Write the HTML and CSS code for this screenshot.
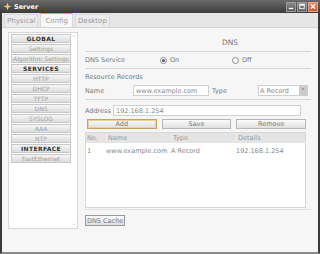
FILE: index.html
```html
<!DOCTYPE html>
<html lang="en">
<head>
  <meta charset="UTF-8">
  <title>Server</title>
  <link rel="stylesheet" href="styles.css">
</head>
<body>
  <div class="window">
    <!-- Title bar -->
    <div class="titlebar">
      <span class="app-icon">
        <svg width="9" height="9" viewBox="0 0 9 9"><path d="M4.5 0.5 L5.5 3.5 L8.5 4.5 L5.5 5.5 L4.5 8.5 L3.5 5.5 L0.5 4.5 L3.5 3.5 Z" fill="#e9c46a"/></svg>
      </span>
      <span class="title">Server</span>
      <div class="controls">
        <span class="ctl">
          <svg width="9" height="9" viewBox="0 0 9 9"><rect x="2" y="6" width="5" height="1.5" fill="#fff"/></svg>
        </span>
        <span class="ctl">
          <svg width="9" height="9" viewBox="0 0 9 9"><rect x="2" y="2" width="5" height="5" fill="none" stroke="#fff" stroke-width="1"/><rect x="2" y="2" width="5" height="1.5" fill="#fff"/></svg>
        </span>
        <span class="ctl close">
          <svg width="9" height="9" viewBox="0 0 9 9"><path d="M2 2 L7 7 M7 2 L2 7" stroke="#fff" stroke-width="1.6"/></svg>
        </span>
      </div>
    </div>

    <!-- Tabs -->
    <div class="tabs">
      <span class="tab">Physical</span>
      <span class="tab active">Config</span>
      <span class="tab">Desktop</span>
    </div>

    <div class="main">
      <!-- Left menu -->
      <div class="sidebar">
        <ul class="menu">
          <li class="menu-head">GLOBAL</li>
          <li>Settings</li>
          <li>Algorithm Settings</li>
          <li class="menu-head">SERVICES</li>
          <li>HTTP</li>
          <li>DHCP</li>
          <li>TFTP</li>
          <li>DNS</li>
          <li>SYSLOG</li>
          <li>AAA</li>
          <li>NTP</li>
          <li class="menu-head">INTERFACE</li>
          <li>FastEthernet</li>
        </ul>
        <div class="scroll">
          <span class="arrow">&#8963;</span>
          <span class="arrow">&#8964;</span>
        </div>
      </div>

      <!-- DNS panel -->
      <div class="panel">
        <div class="panel-title">DNS</div>
        <div class="row service">
          <span class="label">DNS Service</span>
          <span class="radio"><span class="dot on"></span>On</span>
          <span class="radio"><span class="dot"></span>Off</span>
        </div>
        <div class="section">Resource Records</div>
        <div class="row name-row">
          <span class="label">Name</span>
          <span class="input name-input">www.example.com</span>
          <span class="label type-label">Type</span>
          <span class="select">A Record<span class="select-btn">&#709;</span></span>
        </div>
        <div class="row addr-row">
          <span class="label">Address</span>
          <span class="input addr-input">192.168.1.254</span>
        </div>
        <div class="buttons">
          <span class="btn focus">Add</span>
          <span class="btn">Save</span>
          <span class="btn">Remove</span>
        </div>
        <div class="table">
          <div class="thead">
            <span class="c-no">No.</span>
            <span class="c-name">Name</span>
            <span class="c-type">Type</span>
            <span class="c-det">Details</span>
          </div>
          <div class="trow">
            <span class="c-no">1</span>
            <span class="c-name">www.example.com</span>
            <span class="c-type">A Record</span>
            <span class="c-det">192.168.1.254</span>
          </div>
        </div>
        <div class="footer">
          <span class="btn small">DNS Cache</span>
        </div>
      </div>
    </div>
  </div>
</body>
</html>
```

FILE: styles.css
```css
* {
  margin: 0;
  padding: 0;
  box-sizing: border-box;
}

body {
  width: 320px;
  height: 254px;
  overflow: hidden;
  font-family: "DejaVu Sans", Verdana, sans-serif;
  font-size: 6.5px;
  color: #777;
  background: #fff;
}

.window {
  width: 320px;
  height: 254px;
  display: flex;
  flex-direction: column;
  background: #f2f2f2;
  border-left: 2px solid #3a3a3a;
  border-right: 2px solid #3a3a3a;
  border-bottom: 2px solid #8a8a8a;
}

/* Title bar */
.titlebar {
  height: 13px;
  margin: 0 -2px;
  display: flex;
  align-items: center;
  padding: 0 2px 0 3px;
  background: linear-gradient(#6a6a6a, #3c3c3c);
  color: #fff;
}

.app-icon {
  display: flex;
  margin-right: 2px;
}

.title {
  font-weight: bold;
  font-size: 6.5px;
}

.controls {
  margin-left: auto;
  display: flex;
  gap: 1px;
}

.ctl {
  width: 10px;
  height: 10px;
  display: flex;
  align-items: center;
  justify-content: center;
  background: linear-gradient(#8a8a8a, #5a5a5a);
  border: 1px solid #9a9a9a;
}

.ctl.close {
  background: linear-gradient(#f08a5a, #d0542a);
  border-color: #f0a080;
}

/* Tabs */
.tabs {
  height: 15px;
  display: flex;
  align-items: flex-end;
  gap: 2px;
  padding: 1px 0 0 2px;
  background: #e6e6e6;
  border-bottom: 1px solid #d4d4d4;
}

.tab {
  height: 13px;
  padding: 0 2px;
  display: flex;
  align-items: center;
  font-size: 7px;
  color: #999;
  background: #ececec;
  border: 1px solid #dadada;
  border-bottom: none;
}

.tab.active {
  height: 14px;
  padding: 0 4px;
  background: #f8f8f8;
  border-top: 1px solid #e8a030;
}

/* Main area */
.main {
  flex: 1;
  display: flex;
  gap: 7px;
  padding: 4px 7px 0 6px;
  background: #f6f6f6;
}

.sidebar {
  width: 70px;
  height: 197px;
  display: flex;
  background: #fff;
  border: 1px solid #d8d8d8;
  padding: 1px 0 0 2px;
}

.menu {
  list-style: none;
  width: 60px;
  display: flex;
  flex-direction: column;
  gap: 1px;
}

.menu li {
  height: 9px;
  line-height: 8px;
  text-align: center;
  font-size: 6px;
  color: #a0a0a0;
  background: linear-gradient(#f6f6f6, #dcdcdc);
  border: 1px solid #c8c8c8;
  white-space: nowrap;
}

.menu li.menu-head {
  color: #333;
  font-weight: bold;
  letter-spacing: 0.4px;
}

.scroll {
  flex: 1;
  display: flex;
  flex-direction: column;
  justify-content: space-between;
  align-items: center;
  padding-bottom: 2px;
}

.arrow {
  font-size: 6px;
  color: #b8c4d4;
}

/* DNS panel */
.panel {
  flex: 1;
  display: flex;
  flex-direction: column;
}

.panel-title {
  text-align: center;
  font-size: 7.5px;
  color: #777;
  padding: 6px 0 4px 64px;
  border-bottom: 1px solid #d8d8d8;
}

.row {
  display: flex;
  align-items: center;
}

.label {
  color: #777;
}

.service {
  height: 17px;
  border-bottom: 1px solid #d8d8d8;
}

.service .label {
  width: 75px;
}

.radio {
  width: 72px;
  display: flex;
  align-items: center;
  gap: 3px;
}

.dot {
  width: 7px;
  height: 7px;
  border-radius: 50%;
  border: 1px solid #888;
  background: #fff;
  position: relative;
}

.dot.on::after {
  content: '';
  position: absolute;
  left: 1px;
  top: 1px;
  width: 3px;
  height: 3px;
  border-radius: 50%;
  background: #555;
}

.section {
  height: 16px;
  display: flex;
  align-items: center;
  color: #777;
}

.name-row {
  height: 15px;
  padding-bottom: 3px;
  border-bottom: 1px solid #d8d8d8;
}

.name-row .label {
  width: 48px;
}

.input {
  height: 11px;
  display: flex;
  align-items: center;
  padding-left: 2px;
  background: #fff;
  border: 1px solid #cfcfcf;
  color: #888;
}

.name-input {
  width: 76px;
}

.type-label {
  width: auto !important;
  margin-left: 3px;
  flex: 1;
}

.select {
  width: 50px;
  height: 11px;
  margin-right: 3px;
  display: flex;
  align-items: center;
  padding-left: 1px;
  background: #fff;
  border: 1px solid #cfcfcf;
  color: #888;
}

.select-btn {
  margin-left: auto;
  width: 8px;
  height: 9px;
  font-size: 6px;
  line-height: 9px;
  text-align: center;
  color: #333;
  background: #ccc;
}

.addr-row {
  height: 18px;
  padding-top: 3px;
}

.addr-row .label {
  width: 28px;
}

.addr-input {
  width: 188px;
}

.buttons {
  display: flex;
  gap: 5px;
  padding: 1px 5px 3px 2px;
}

.btn {
  flex: 1;
  height: 10px;
  display: flex;
  align-items: center;
  justify-content: center;
  color: #777;
  background: linear-gradient(#fafafa, #e0e0e0);
  border: 1px solid #b8b8b8;
}

.btn.focus {
  border-color: #c8a060;
  box-shadow: inset 0 0 0 1px #e8d0a0;
}

.table {
  height: 76px;
  margin-right: 5px;
  background: #fff;
  border: 1px solid #d8d8d8;
}

.thead,
.trow {
  display: flex;
  height: 10px;
  align-items: center;
  color: #888;
}

.thead {
  background: #e4e4e4;
  color: #999;
}

.trow {
  height: 16px;
}

.c-no {
  width: 20px;
  padding-left: 1px;
}

.c-name {
  width: 65px;
}

.c-type {
  width: 65px;
}

.c-det {
  flex: 1;
}

.thead span + span {
  border-left: 1px solid #f0f0f0;
  padding-left: 1px;
}

.footer {
  padding-top: 5px;
  border-top: 1px solid #e0e0e0;
  margin-top: 1px;
}

.btn.small {
  display: inline-flex;
  padding: 0 1px;
  height: 11px;
  border-color: #999;
}
```
